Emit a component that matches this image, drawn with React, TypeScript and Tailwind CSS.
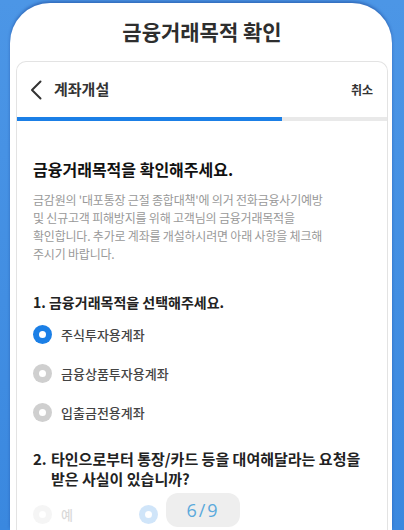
import React from "react";

function Radio({ checked }: { checked: boolean }) {
  return (
    <span
      className={
        checked
          ? "flex h-[19px] w-[19px] shrink-0 items-center justify-center rounded-full bg-[#1b7fe6]"
          : "flex h-[19px] w-[19px] shrink-0 items-center justify-center rounded-full bg-[#cfcfcf]"
      }
    >
      <span className="h-[7px] w-[7px] rounded-full bg-white" />
    </span>
  );
}

function Option({ label, checked }: { label: string; checked: boolean }) {
  return (
    <div className="flex h-[39px] items-center gap-[9px]">
      <Radio checked={checked} />
      <span className="text-[13px] font-medium text-[#444]">{label}</span>
    </div>
  );
}

export default function App() {
  return (
    <div className="flex h-[530px] w-[404px] flex-col overflow-hidden bg-gradient-to-b from-[#4c96e6] to-[#3a88df] pl-[10px] pr-[12px] pt-[3px] font-['Noto_Sans_CJK_KR',sans-serif]">
      <div className="flex min-h-0 flex-1 flex-col rounded-t-[40px] bg-white pl-[6px] pr-[4px] shadow-[0_-2px_3px_rgba(20,60,140,0.45)]">
        <h1 className="h-[58px] pt-[14px] text-center text-[21px] font-bold leading-[28px] text-[#2e2e2e]">
          금융거래목적 확인
        </h1>

        <div className="relative flex min-h-0 flex-1 flex-col overflow-hidden rounded-t-[10px] border border-b-0 border-[#e3e3e3]">
          {/* top bar */}
          <div className="flex h-[55px] shrink-0 items-center pl-[13px] pr-[14px]">
            <svg width="12" height="20" viewBox="0 0 12 20" className="shrink-0">
              <polyline
                points="10.5,1.5 2,10 10.5,18.5"
                fill="none"
                stroke="#333"
                strokeWidth="2"
                strokeLinecap="round"
                strokeLinejoin="round"
              />
            </svg>
            <span className="ml-[12px] text-[15px] font-bold text-[#333]">계좌개설</span>
            <span className="ml-auto text-[12px] font-bold text-[#333]">취소</span>
          </div>

          {/* progress */}
          <div className="h-[4px] shrink-0 bg-[#e9e9e9]">
            <div className="h-full w-[265px] bg-[#1b7fe6]" />
          </div>

          {/* body */}
          <div className="flex flex-col px-[16px] pt-[37px]">
            <h2 className="text-[16px] font-bold leading-[22px] text-[#111]">
              금융거래목적을 확인해주세요.
            </h2>
            <p className="mt-[11px] text-[12px] leading-[18px] tracking-[-0.2px] text-[#999]">
              금감원의 '대포통장 근절 종합대책'에 의거 전화금융사기예방
              <br />
              및 신규고객 피해방지를 위해 고객님의 금융거래목적을
              <br />
              확인합니다. 추가로 계좌를 개설하시려면 아래 사항을 체크해
              <br />
              주시기 바랍니다.
            </p>

            <h3 className="mt-[29px] text-[14px] font-bold leading-[20px] text-[#222]">
              1. 금융거래목적을 선택해주세요.
            </h3>
            <div className="mt-[3px] flex flex-col">
              <Option label="주식투자용계좌" checked />
              <Option label="금융상품투자용계좌" checked={false} />
              <Option label="입출금전용계좌" checked={false} />
            </div>

            <div className="mt-[17px] flex text-[15px] font-bold leading-[20px] text-[#222]">
              <span className="w-[18px] shrink-0">2.</span>
              <span>
                타인으로부터 통장/카드 등을 대여해달라는 요청을
                <br />
                받은 사실이 있습니까?
              </span>
            </div>

            <div className="mt-[6px] flex h-[39px] items-center opacity-20">
              <div className="flex w-[106px] items-center gap-[9px]">
                <Radio checked={false} />
                <span className="text-[13px] font-medium text-[#444]">예</span>
              </div>
              <Radio checked />
            </div>
          </div>

          {/* page indicator */}
          <div className="absolute left-[149px] top-[431px] flex h-[34px] w-[74px] items-center justify-center rounded-[12px] bg-[#eeeeee] font-['Open_Sans',sans-serif] text-[18px] tracking-[2px] text-[#5aa9dc]">
            6/9
          </div>
        </div>
      </div>
    </div>
  );
}
